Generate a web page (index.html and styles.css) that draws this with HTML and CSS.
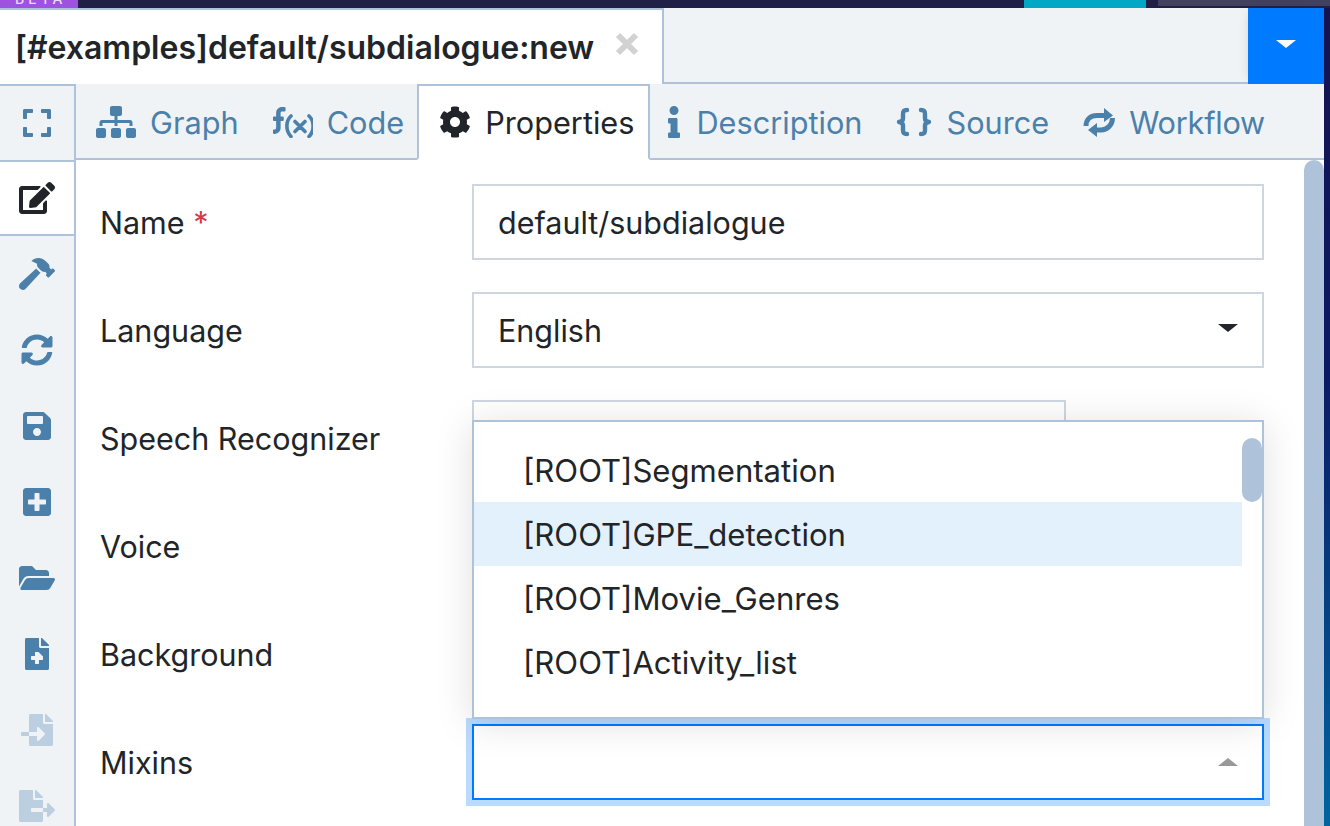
FILE: index.html
```html
<!DOCTYPE html>
<html lang="en">
<head>
<meta charset="utf-8">
<title>default/subdialogue</title>
<link rel="stylesheet" href="styles.css">
</head>
<body>
<div class="app">
  <header class="topbar">
    <div class="beta"><span>BETA</span></div>
    <div class="top-spacer"></div>
    <div class="top-teal"></div>
    <div class="top-grey"></div>
  </header>
  <div class="workspace">
    <div class="panel">
      <div class="docbar">
        <div class="doctab">
          <span class="doctitle">[#examples]default/subdialogue:new</span>
          <svg class="close" viewBox="0 0 24 24"><path d="M3 3 21 21M21 3 3 21"/></svg>
        </div>
        <div class="doc-spacer"></div>
        <button class="docmenu"><span class="caret-white"></span></button>
      </div>
      <div class="main">
        <nav class="sidebar">
          <div class="side first"><svg class="ic" viewBox="0 0 448 512"><path d="M0 180V56c0-13.3 10.7-24 24-24h124c6.6 0 12 5.4 12 12v40c0 6.6-5.4 12-12 12H64v84c0 6.6-5.4 12-12 12H12c-6.6 0-12-5.4-12-12zM288 44v40c0 6.6 5.4 12 12 12h84v84c0 6.6 5.4 12 12 12h40c6.6 0 12-5.4 12-12V56c0-13.3-10.7-24-24-24H300c-6.6 0-12 5.4-12 12zm148 276h-40c-6.6 0-12 5.4-12 12v84h-84c-6.6 0-12 5.4-12 12v40c0 6.6 5.4 12 12 12h124c13.3 0 24-10.7 24-24V332c0-6.6-5.4-12-12-12zM160 468v-40c0-6.6-5.4-12-12-12H64v-84c0-6.6-5.4-12-12-12H12c-6.6 0-12 5.4-12 12v124c0 13.3 10.7 24 24 24h124c6.6 0 12-5.4 12-12z"/></svg></div>
          <div class="side active"><svg class="ic" viewBox="0 0 576 512"><path d="M402.6 83.2l90.2 90.2c3.8 3.8 3.8 10 0 13.8L274.4 405.6l-92.8 10.3c-12.4 1.4-22.9-9.1-21.5-21.5l10.3-92.8L388.8 83.2c3.8-3.8 10-3.8 13.8 0zm162-22.9l-48.8-48.8c-15.2-15.2-39.9-15.2-55.2 0l-35.4 35.4c-3.8 3.8-3.8 10 0 13.8l90.2 90.2c3.8 3.8 10 3.8 13.8 0l35.4-35.4c15.2-15.3 15.2-40 0-55.2zM384 346.2V448H64V128h229.8c3.2 0 6.2-1.3 8.5-3.5l40-40c7.6-7.6 2.2-20.5-8.5-20.5H48C21.5 64 0 85.5 0 112v352c0 26.5 21.5 48 48 48h352c26.5 0 48-21.5 48-48V306.2c0-10.7-12.9-16-20.5-8.5l-40 40c-2.2 2.3-3.5 5.3-3.5 8.5z"/></svg></div>
          <div class="side"><svg class="ic" viewBox="0 0 576 512"><path d="M571.31 193.94l-22.63-22.63c-6.25-6.25-16.38-6.25-22.63 0l-11.31 11.31-28.9-28.9c5.63-21.31.36-44.9-16.35-61.61l-45.25-45.25c-62.48-62.48-163.79-62.48-226.28 0l90.51 45.25v18.75c0 16.97 6.74 33.25 18.75 45.25l49.14 49.14c16.71 16.71 40.3 21.98 61.61 16.35l28.9 28.9-11.31 11.31c-6.25 6.25-6.25 16.38 0 22.63l22.63 22.63c6.25 6.25 16.38 6.25 22.63 0l90.51-90.51c6.23-6.24 6.23-16.37-.02-22.62zm-286.72-15.2c-3.7-3.7-6.84-7.79-9.85-11.95L19.64 404.96c-25.57 23.88-26.26 64.19-1.53 88.93s65.05 24.05 88.93-1.53l238.13-255.07c-3.96-2.91-7.9-5.87-11.44-9.41l-49.14-49.14z"/></svg></div>
          <div class="side"><svg class="ic" viewBox="0 0 512 512"><path d="M370.72 133.28C339.458 104.008 298.888 87.962 255.848 88c-77.458.068-144.328 53.178-162.791 126.85-1.344 5.363-6.122 9.15-11.651 9.15H24.103c-7.498 0-13.194-6.807-11.807-14.176C33.933 94.924 134.813 8 256 8c66.448 0 126.791 26.136 171.315 68.685L463.03 40.97C478.149 25.851 504 36.559 504 57.941V192c0 13.255-10.745 24-24 24H345.941c-21.382 0-32.09-25.851-16.971-40.971l41.75-41.749zM32 296h134.059c21.382 0 32.09 25.851 16.971 40.971l-41.75 41.75c31.262 29.273 71.835 45.319 114.876 45.28 77.418-.07 144.315-53.144 162.787-126.849 1.344-5.363 6.122-9.15 11.651-9.15h57.304c7.498 0 13.194 6.807 11.807 14.176C478.067 417.076 377.187 504 256 504c-66.448 0-126.791-26.136-171.315-68.685L48.97 471.03C33.851 486.149 8 475.441 8 454.059V320c0-13.255 10.745-24 24-24z"/></svg></div>
          <div class="side"><svg class="ic" viewBox="0 0 448 512"><path d="M433.941 129.941l-83.882-83.882A48 48 0 0 0 316.118 32H48C21.49 32 0 53.49 0 80v352c0 26.51 21.49 48 48 48h352c26.51 0 48-21.49 48-48V163.882a48 48 0 0 0-14.059-33.941zM224 416c-35.346 0-64-28.654-64-64 0-35.346 28.654-64 64-64s64 28.654 64 64c0 35.346-28.654 64-64 64zm96-304.52V212c0 6.627-5.373 12-12 12H76c-6.627 0-12-5.373-12-12V108c0-6.627 5.373-12 12-12h228.52c3.183 0 6.235 1.264 8.485 3.515l3.48 3.48A11.996 11.996 0 0 1 320 111.48z"/></svg></div>
          <div class="side"><svg class="ic" viewBox="0 0 448 512"><path d="M400 32H48C21.5 32 0 53.5 0 80v352c0 26.5 21.5 48 48 48h352c26.5 0 48-21.5 48-48V80c0-26.5-21.5-48-48-48zm-32 252c0 6.6-5.4 12-12 12h-92v92c0 6.6-5.4 12-12 12h-56c-6.6 0-12-5.4-12-12v-92H92c-6.6 0-12-5.4-12-12v-56c0-6.6 5.4-12 12-12h92v-92c0-6.6 5.4-12 12-12h56c6.6 0 12 5.4 12 12v92h92c6.6 0 12 5.4 12 12v56z"/></svg></div>
          <div class="side"><svg class="ic" viewBox="0 0 576 512"><path d="M572.694 292.093L500.27 416.248A63.997 63.997 0 0 1 444.989 448H45.025c-18.523 0-30.064-20.093-20.731-36.093l72.424-124.155A64 64 0 0 1 152 256h399.964c18.523 0 30.064 20.093 20.73 36.093zM152 224h328v-48c0-26.51-21.49-48-48-48H272l-64-64H48C21.49 64 0 85.49 0 112v278.046l69.077-118.418C86.214 242.25 117.989 224 152 224z"/></svg></div>
          <div class="side"><svg class="ic" viewBox="0 0 384 512"><path d="M377 105L279.1 7c-4.5-4.5-10.6-7-17-7H256v128h128v-6.1c0-6.3-2.5-12.4-7-16.9zm-153 31V0H24C10.7 0 0 10.7 0 24v464c0 13.3 10.7 24 24 24h336c13.3 0 24-10.7 24-24V160H248c-13.2 0-24-10.8-24-24zm64 160v48c0 4.4-3.6 8-8 8h-56v56c0 4.4-3.6 8-8 8h-48c-4.4 0-8-3.6-8-8v-56h-56c-4.4 0-8-3.6-8-8v-48c0-4.4 3.6-8 8-8h56v-56c0-4.4 3.6-8 8-8h48c4.4 0 8 3.6 8 8z"/></svg></div>
          <div class="side disabled"><svg class="ic" viewBox="0 0 512 512"><path d="M16 288c-8.8 0-16 7.2-16 16v32c0 8.8 7.2 16 16 16h112v-64zm489-183L407.1 7c-4.5-4.5-10.6-7-17-7H384v128h128v-6.1c0-6.4-2.5-12.5-7-16.9zm-153 31V0H152c-13.3 0-24 10.7-24 24v264h128v-65.2c0-14.3 17.3-21.4 27.4-11.3L379 308c6.6 6.7 6.6 17.4 0 24l-95.7 96.4c-10.1 10.1-27.4 3-27.4-11.3V352H128v136c0 13.3 10.7 24 24 24h336c13.3 0 24-10.7 24-24V160H376c-13.2 0-24-10.8-24-24z"/></svg></div>
          <div class="side disabled"><svg class="ic" viewBox="0 0 576 512"><path d="M384 121.9c0-6.3-2.5-12.4-7-16.9L279.1 7c-4.5-4.5-10.6-7-17-7H256v128h128zM571 308l-95.7-96.4c-10.1-10.1-27.4-3-27.4 11.3V288h-64v64h64v65.2c0 14.3 17.3 21.4 27.4 11.3L571 332c6.6-6.6 6.6-17.4 0-24zm-379 28v-32c0-8.8 7.2-16 16-16h176V160H248c-13.2 0-24-10.8-24-24V0H24C10.7 0 0 10.7 0 24v464c0 13.3 10.7 24 24 24h336c13.3 0 24-10.7 24-24V352H208c-8.8 0-16-7.2-16-16z"/></svg></div>
        </nav>
        <div class="content">
          <div class="tabs">
            <a class="tab t-graph"><svg class="tic w40" viewBox="0 0 640 512"><path d="M128 352H32c-17.67 0-32 14.33-32 32v96c0 17.67 14.33 32 32 32h96c17.67 0 32-14.33 32-32v-96c0-17.67-14.33-32-32-32zm-24-80h192v48h48v-48h192v48h48v-57.59c0-21.17-17.23-38.41-38.41-38.41H344v-64h40c17.67 0 32-14.33 32-32V32c0-17.67-14.33-32-32-32H256c-17.67 0-32 14.33-32 32v96c0 17.67 14.33 32 32 32h40v64H94.41C73.23 224 56 241.23 56 262.41V320h48v-48zm264 80h-96c-17.67 0-32 14.33-32 32v96c0 17.67 14.33 32 32 32h96c17.67 0 32-14.33 32-32v-96c0-17.67-14.33-32-32-32zm240 0h-96c-17.67 0-32 14.33-32 32v96c0 17.67 14.33 32 32 32h96c17.67 0 32-14.33 32-32v-96c0-17.67-14.33-32-32-32z"/></svg><span class="tl">Graph</span></a>
            <a class="tab t-code"><svg class="tic w42" viewBox="0 0 42 32"><path transform="translate(2 1) scale(.056)" d="M224 16c0-8.840-7.160-16-16-16h-48C102.560 0 56 46.560 56 104v64H16c-8.840 0-16 7.160-16 16v48c0 8.840 7.160 16 16 16h40v128c0 13.200-10.800 24-24 24H16c-8.840 0-16 7.160-16 16v48c0 8.840 7.160 16 16 16h16c57.440 0 104-46.560 104-104V248h40c8.840 0 16-7.160 16-16v-48c0-8.840-7.160-16-16-16h-40v-64c0-13.200 10.800-24 24-24h48c8.840 0 16-7.160 16-16V16z"/><path class="thick" d="M20 10C14.500 15 14.500 25 20 30.500M38 10C43.500 15 43.500 25 38 30.500M24 15.500 34 25.500M34 15.500 24 25.500"/></svg><span class="tl">Code</span></a>
            <a class="tab t-active"><svg class="tic w32" viewBox="0 0 512 512"><path d="M487.4 315.7l-42.6-24.6c4.3-23.2 4.3-47 0-70.2l42.6-24.6c4.9-2.8 7.1-8.6 5.5-14-11.1-35.6-30-67.8-54.7-94.6-3.8-4.1-10-5.1-14.8-2.3L380.8 110c-17.9-15.4-38.5-27.3-60.8-35.1V25.8c0-5.6-3.9-10.5-9.4-11.7-36.7-8.2-74.3-7.8-109.2 0-5.5 1.2-9.4 6.1-9.4 11.7V75c-22.2 7.9-42.8 19.8-60.8 35.1L88.7 85.5c-4.9-2.8-11-1.9-14.8 2.3-24.7 26.7-43.6 58.9-54.7 94.6-1.7 5.4.6 11.2 5.5 14L67.3 221c-4.3 23.2-4.3 47 0 70.2l-42.6 24.6c-4.9 2.8-7.1 8.6-5.5 14 11.1 35.6 30 67.8 54.7 94.6 3.8 4.1 10 5.1 14.8 2.3l42.6-24.6c17.9 15.4 38.5 27.3 60.8 35.1v49.2c0 5.6 3.9 10.5 9.4 11.7 36.7 8.2 74.3 7.8 109.2 0 5.5-1.2 9.4-6.1 9.4-11.7v-49.2c22.2-7.9 42.8-19.8 60.8-35.1l42.6 24.6c4.9 2.8 11 1.9 14.8-2.3 24.7-26.7 43.6-58.9 54.7-94.6 1.5-5.5-.7-11.3-5.6-14.1zM256 336c-44.1 0-80-35.9-80-80s35.9-80 80-80 80 35.9 80 80-35.9 80-80 80z"/></svg><span class="tl">Properties</span></a>
            <a class="tab t-desc"><svg class="tic w12" viewBox="0 0 192 512"><path d="M20 424.229h20V279.771H20c-11.046 0-20-8.954-20-20V212c0-11.046 8.954-20 20-20h112c11.046 0 20 8.954 20 20v212.229h20c11.046 0 20 8.954 20 20V492c0 11.046-8.954 20-20 20H20c-11.046 0-20-8.954-20-20v-47.771c0-11.046 8.954-20 20-20zM96 0C56.235 0 24 32.235 24 72s32.235 72 72 72 72-32.235 72-72S135.764 0 96 0z"/></svg><span class="tl">Description</span></a>
            <a class="tab t-src"><svg class="tic w36" viewBox="0 0 36 32"><path class="braces" d="M11 4C7.500 4 7 5.500 7 8V12.500C7 14.500 6 15.500 3 16C6 16.500 7 17.500 7 19.500V24C7 26.500 7.500 28 11 28M25 4C28.500 4 29 5.500 29 8V12.500C29 14.500 30 15.500 33 16C30 16.500 29 17.500 29 19.500V24C29 26.500 28.500 28 25 28"/></svg><span class="tl">Source</span></a>
            <a class="tab t-flow"><svg class="tic w32" viewBox="0 0 32 32"><path class="loop" d="M3 20C3 13 8 9.500 14 9.500H22M29.500 12C29.500 19 24 24 18 24H11"/><path d="M21 2 30 9.500 21 16ZM14 17 5 24 14 31Z"/></svg><span class="tl">Workflow</span></a>
            <div class="tabs-fill"></div>
          </div>
          <div class="body">
            <form class="form">
              <div class="row"><label class="lbl">Name <span class="req">*</span></label><div class="field">default/subdialogue</div></div>
              <div class="row"><label class="lbl">Language</label><div class="field select">English<span class="caret-down"></span></div></div>
              <div class="row"><label class="lbl">Speech Recognizer</label><div class="field short"></div></div>
              <div class="row"><label class="lbl">Voice</label><div class="field short"></div></div>
              <div class="row"><label class="lbl">Background</label><div class="field short"></div></div>
              <div class="row"><label class="lbl">Mixins</label>
                <div class="combo">
                  <div class="menu">
                    <ul class="options">
                      <li class="opt">[ROOT]Segmentation</li>
                      <li class="opt hl">[ROOT]GPE_detection</li>
                      <li class="opt">[ROOT]Movie_Genres</li>
                      <li class="opt">[ROOT]Activity_list</li>
                    </ul>
                    <div class="menu-scroll"><div class="menu-thumb"></div></div>
                  </div>
                  <div class="field focus select"><span class="caret-up"></span></div>
                </div>
              </div>
            </form>
            <div class="scroll"><div class="thumb"></div></div>
          </div>
        </div>
      </div>
    </div>
    <div class="strip"></div>
  </div>
</div>
</body>
</html>
```
FILE: styles.css
```css
* { box-sizing: border-box; }
html, body { margin: 0; padding: 0; height: 100%; overflow: hidden; }
body { font-family: Inter, "Liberation Sans", sans-serif; font-size: 30.5px; color: #212529; background: #fff; }
.app { display: flex; flex-direction: column; width: 1330px; height: 826px; overflow: hidden; }

.topbar { display: flex; height: 8px; background: #1f1f47; flex: none; }
.beta { width: 78px; height: 8px; background: #9f52e0; overflow: hidden; padding-left: 15px; }
.beta span { display: block; font-size: 14px; line-height: 14px; margin-top: -8px; letter-spacing: 4px; color: #eadcfb; font-weight: 500; }
.top-spacer { width: 946px; }
.top-teal { width: 122px; background: #00a8c6; }
.top-grey { width: 172px; height: 6px; margin-left: 12px; background: #42405f; }

.workspace { display: flex; flex: 1; min-height: 0; }
.panel { flex: 1; min-width: 0; display: flex; flex-direction: column; }
.strip { width: 6px; background: linear-gradient(180deg, #14134f 0%, #0b1a66 45%, #00659f 100%); }

.docbar { display: flex; height: 76px; flex: none; background: #eff3f6; }
.doctab { width: 664px; background: #fff; border-top: 2px solid #aec3d9; border-right: 2px solid #aec3d9; display: flex; align-items: center; padding-left: 15px; position: relative; }
.doctitle { font-weight: 600; font-size: 32px; white-space: nowrap; }
.close { width: 24px; height: 24px; position: absolute; left: 615px; top: 22px; }
.close path { fill: none; stroke: #d2d2d2; stroke-width: 6; }
.doc-spacer { flex: 1; border-bottom: 2px solid #aec3d9; }
.docmenu { width: 76px; border: 0; padding: 0 0 4px; background: #007bff; display: flex; align-items: center; justify-content: center; box-shadow: -6px 0 10px -6px rgba(0, 0, 0, .12); }
.caret-white { width: 0; height: 0; border-left: 10px solid transparent; border-right: 10px solid transparent; border-top: 8px solid #fff; }

.main { display: flex; flex: 1; min-height: 0; }
.sidebar { width: 76px; flex: none; background: #eff3f6; border-right: 2px solid #aec3d9; border-top: 2px solid #aec3d9; display: flex; flex-direction: column; }
.side { height: 76px; flex: none; display: flex; align-items: center; justify-content: center; color: #4b80ab; }
.side.first { height: 74px; }
.side.active { background: #fff; color: #212529; border-top: 2px solid #aec3d9; border-bottom: 2px solid #aec3d9; }
.side.disabled { color: #bccfe0; }
.ic { height: 32px; width: 36px; fill: currentColor; display: block; }

.content { flex: 1; min-width: 0; display: flex; flex-direction: column; }
.tabs { display: flex; height: 76px; flex: none; background: #eff3f6; font-size: 30.7px; }
.tab { display: flex; align-items: center; gap: 15px; padding: 0 17px; height: 76px; color: #4b80ab; border-top: 2px solid transparent; border-bottom: 2px solid #aec3d9; white-space: nowrap; }
.t-graph { padding: 0 15px 0 20px; gap: 14px; }
.t-code { padding-right: 13px; gap: 14px; }
.t-active { background: #fff; color: #212529; border: 2px solid #aec3d9; border-bottom-color: #fff; padding: 0 14px 0 20px; gap: 14px; }
.t-desc { padding-left: 18px; gap: 16px; }
.t-src { gap: 14px; }
.t-flow { padding-left: 17px; gap: 14px; letter-spacing: -.25px; }
.tabs-fill { flex: 1; border-bottom: 2px solid #aec3d9; }
.tic { height: 32px; fill: currentColor; flex: none; display: block; }
.w40 { width: 40px; }
.w42 { width: 42px; }
.w32 { width: 32px; }
.w12 { width: 12px; }
.w36 { width: 36px; }
.thick { fill: none; stroke: currentColor; stroke-width: 3.6; stroke-linecap: round; }
.braces { fill: none; stroke: currentColor; stroke-width: 4.4; stroke-linejoin: round; stroke-linecap: round; }
.loop { fill: none; stroke: currentColor; stroke-width: 5; }

.body { flex: 1; min-height: 0; display: flex; }
.form { flex: 1; min-width: 0; padding: 24px 40px 0 24px; }
.scroll { width: 20px; flex: none; }
.thumb { height: 100%; background: #aec3d9; border-radius: 10px 10px 0 0; }

.row { display: flex; align-items: center; height: 76px; margin-bottom: 32px; }
.lbl { width: 372px; flex: none; }
.req { color: #dc3545; }
.field { position: relative; flex: 1; height: 76px; border: 2px solid #ced6df; background: #fff; display: flex; align-items: center; padding: 0 0 0 24px; }
.field.short { flex: none; width: 594px; }
.caret-down { position: absolute; right: 24px; top: 30px; width: 0; height: 0; border-left: 10px solid transparent; border-right: 10px solid transparent; border-top: 8px solid #212529; }
.caret-up { position: absolute; right: 24px; top: 32px; width: 0; height: 0; border-left: 10px solid transparent; border-right: 10px solid transparent; border-bottom: 8px solid #999; }

.combo { position: relative; flex: 1; height: 76px; display: flex; }
.field.focus { border-color: #007bff; box-shadow: 0 0 0 6px #b8dbff; }
.menu { position: absolute; left: 0; right: 0; bottom: 81px; height: 299px; background: #fff; border: 2px solid #aec3d9; box-shadow: 0 4px 36px rgba(0, 0, 0, .13); display: flex; z-index: 2; }
.options { flex: 1; list-style: none; margin: 0; padding: 16px 0 0; }
.opt { height: 64px; display: flex; align-items: center; padding: 2px 0 0 49px; font-size: 31.1px; }
.opt.hl { background: #e3f1fc; }
.menu-scroll { width: 20px; flex: none; padding-top: 16px; }
.menu-thumb { height: 64px; background: #aec3d9; border-radius: 10px; }
```
